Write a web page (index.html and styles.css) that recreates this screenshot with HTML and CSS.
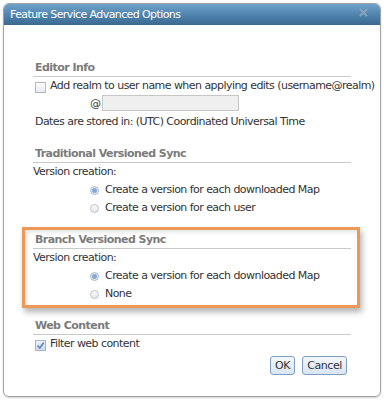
FILE: index.html
```html
<!DOCTYPE html>
<html lang="en">
<head>
  <meta charset="UTF-8" />
  <title>Feature Service Advanced Options</title>
  <link rel="stylesheet" href="styles.css">
</head>
<body>
  <div class="dialog">
    <div class="titlebar">
      <span>Feature Service Advanced Options</span>
      <svg class="close" width="9" height="9" viewBox="0 0 9 9"><path d="M1 1L8 8M8 1L1 8" stroke="#8aa2b8" stroke-width="2"/></svg>
    </div>
    <div class="content">
      <div class="section">
        <div class="heading">Editor Info</div>
        <div class="row"><span class="check"></span>Add realm to user name when applying edits (username@realm)</div>
        <div class="realm"><span>@</span><input type="text" /></div>
        <div class="row">Dates are stored in: (UTC) Coordinated Universal Time</div>
      </div>

      <div class="section">
        <div class="heading">Traditional Versioned Sync</div>
        <div class="label">Version creation:</div>
        <div class="row option"><span class="radio on"></span>Create a version for each downloaded Map</div>
        <div class="row option"><span class="radio"></span>Create a version for each user</div>
      </div>

      <div class="section marked">
        <div class="heading">Branch Versioned Sync</div>
        <div class="label">Version creation:</div>
        <div class="row option"><span class="radio on"></span>Create a version for each downloaded Map</div>
        <div class="row option"><span class="radio"></span>None</div>
      </div>

      <div class="section last">
        <div class="heading">Web Content</div>
        <div class="row"><span class="check on"><svg width="9" height="9" viewBox="0 0 9 9"><path d="M1.5 4.5L3.8 7L7.8 1.5" fill="none" stroke="#5b86bd" stroke-width="1.6"/></svg></span>Filter web content</div>
      </div>

      <div class="buttons">
        <button>OK</button>
        <button>Cancel</button>
      </div>
    </div>
  </div>
</body>
</html>
```

FILE: styles.css
```css
body {
  margin: 0;
  background: #fff;
  font-family: "DejaVu Sans", "Liberation Sans", sans-serif;
  font-size: 11px;
  letter-spacing: -0.55px;
  color: #333;
}
.dialog {
  margin: 3px;
  width: 376px;
  height: 392px;
  border: 1px solid #a3a3a3;
  border-radius: 6px;
  overflow: hidden;
  box-shadow: 0 1px 2px rgba(0,0,0,0.2);
}
.titlebar {
  height: 21px;
  line-height: 21px;
  padding: 0 7px 0 6px;
  background: linear-gradient(#6fa2cb, #4b7fa9 60%, #3a6990);
  color: #fff;
  font-size: 11px;
  letter-spacing: -0.6px;
  display: flex;
  justify-content: space-between;
  align-items: center;
}
.close {
  margin-right: 5px;
  margin-top: -4px;
}
.content {
  padding: 36px 29px 0 29px;
}
.section {
  margin-bottom: 16px;
}
.section.last {
  margin-bottom: 3px;
}
.heading {
  font-weight: bold;
  color: #7b7b7b;
  line-height: 14px;
  padding-bottom: 1px;
  border-bottom: 1px solid #c9c9c9;
  padding-left: 2px;
}
.row {
  display: flex;
  align-items: center;
  line-height: 18px;
  padding-left: 2px;
  white-space: nowrap;
}
.label {
  line-height: 18px;
}
.option {
  padding-left: 57px;
}
.check {
  flex-shrink: 0;
  width: 11px;
  height: 11px;
  border: 1px solid #b3b8bf;
  background: linear-gradient(#fdfdfd, #e6ebf1);
  margin-right: 4px;
  margin-top: 3px;
  display: flex;
  align-items: center;
  justify-content: center;
  box-sizing: border-box;
}
.check.on {
  margin-top: 2px;
  background: linear-gradient(#eef3f9, #cfdbea);
  border-color: #a6b6ca;
}
.radio {
  flex-shrink: 0;
  width: 9px;
  height: 9px;
  border: 1px solid #bcc3cc;
  border-radius: 50%;
  background: linear-gradient(#fbfbfb, #e3e7ec);
  margin-right: 6px;
  box-sizing: border-box;
}
.radio.on {
  background: radial-gradient(circle, #7ea3cf 0, #8eafd7 2.2px, #e4ebf4 2.7px);
  border-color: #a9b8ca;
}
.realm {
  display: flex;
  align-items: center;
  padding-left: 57px;
  margin-bottom: 2px;
}
.realm span {
  margin-right: 2px;
}
.realm input {
  width: 137px;
  height: 16px;
  box-sizing: border-box;
  border: 1px solid #c6c6c6;
  background: #efefef;
  margin: 0;
  padding: 0;
}
.marked {
  position: relative;
}
.marked::after {
  content: "";
  position: absolute;
  top: -6px;
  left: -11px;
  right: -9px;
  bottom: -5px;
  border: 3px solid #ec9856;
  box-shadow: 2px 4px 6px rgba(0,0,0,0.3), inset 2px 2px 4px rgba(0,0,0,0.12);
  pointer-events: none;
}
.buttons {
  display: flex;
  justify-content: flex-end;
  gap: 7px;
  padding-right: 4px;
}
.buttons button {
  height: 19px;
  padding: 0 4px;
  font-family: inherit;
  font-size: 11px;
  letter-spacing: -0.4px;
  color: #333;
  border: 1px solid #7e9dc2;
  border-radius: 3px;
  background: linear-gradient(#f4f7fb, #d9e5f3);
}
```
